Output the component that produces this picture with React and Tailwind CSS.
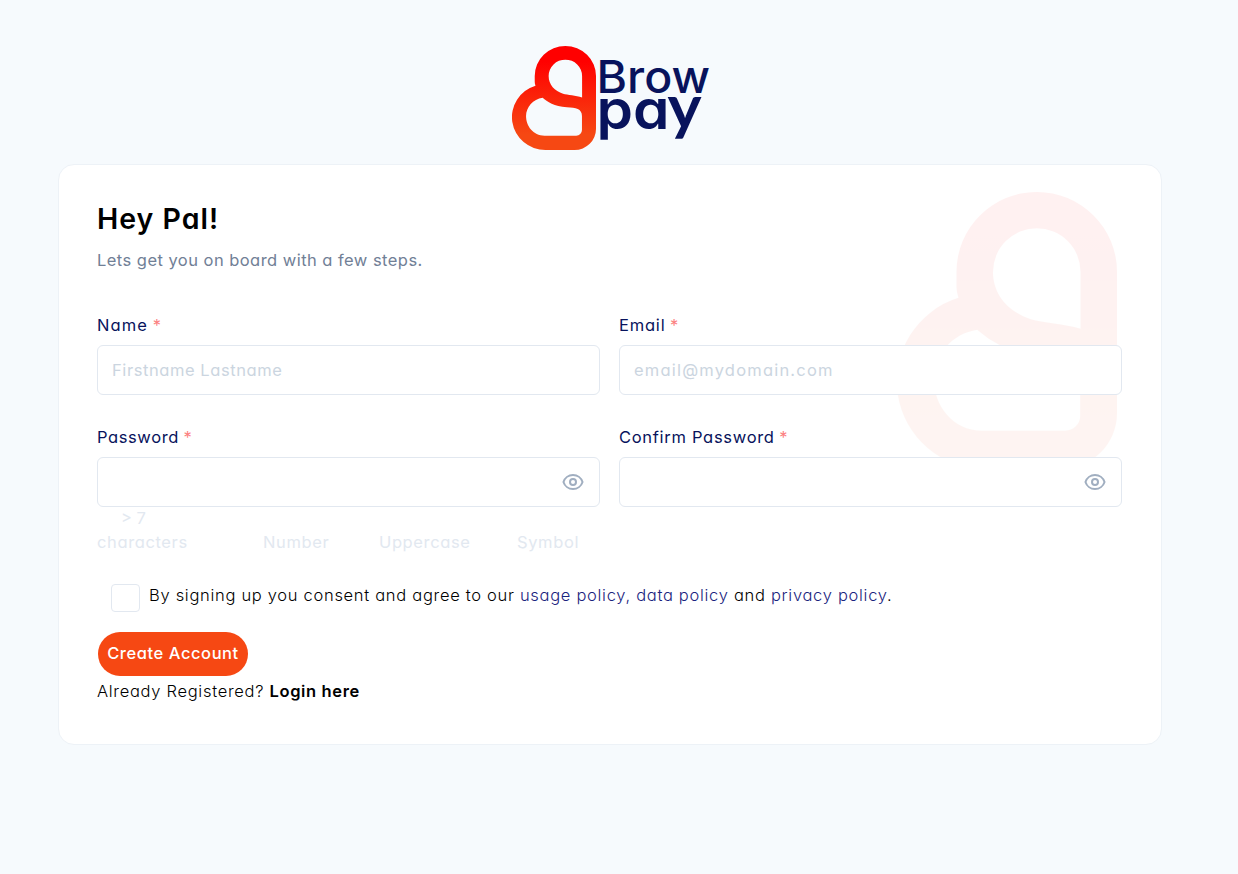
import React, { useState } from 'react';

const LogoMark = ({ id, className }) => (
  <svg viewBox="0 0 658 832" className={className} preserveAspectRatio="none" aria-hidden="true">
    <defs>
      <linearGradient id={id} x1="0" y1="0" x2="0" y2="1">
        <stop offset="0.15" stopColor="#ff0000" />
        <stop offset="0.85" stopColor="#f64813" />
      </linearGradient>
    </defs>
    <path
      fill={`url(#${id})`}
      fillRule="evenodd"
      d="M178 240 A240 240 0 0 1 658 240 V664 A168 168 0 0 1 490 832 H262 A263 263 0 0 1 184 318 Q178 300 178 285 Z
         M549 411 V240 A131 131 0 0 0 287 240 C287 310 335 360 400 382 C435 393 500 395 549 411 Z
         M240 414 C275 444 330 485 430 489 C500 492 548 500 548 560 V672 A45 45 0 0 1 503 717 H255 C165 717 110 640 110 560 C110 490 165 425 240 414 Z"
    />
  </svg>
);

const Logo = () => (
  <div className="ml-0.5 flex h-[104px] w-[198px]">
    <LogoMark id="logo-gradient" className="h-[104px] w-[84px] shrink-0" />
    <svg viewBox="0 0 114 104" className="h-[104px] w-[114px] shrink-0 overflow-visible font-['Inter']" fill="#08135c" style={{ fontFeatureSettings: '"cv11"' }}>
      <text x="0.5" y="47.2" fontSize="45" fontWeight="500" textLength="113.5" lengthAdjust="spacingAndGlyphs">Brow</text>
      <text x="0.5" y="82.6" fontSize="55" fontWeight="600" textLength="73" lengthAdjust="spacingAndGlyphs">pa</text>
      <text x="71.5" y="82.6" fontSize="61" fontWeight="700" fontFamily="Lato" textLength="34" lengthAdjust="spacingAndGlyphs">y</text>
    </svg>
  </div>
);

const EyeIcon = () => (
  <svg viewBox="0 0 24 24" className="h-6 w-6" fill="none" stroke="#a0aec0" strokeWidth="2" strokeLinecap="round" strokeLinejoin="round">
    <circle cx="12" cy="12" r="3" />
    <path d="M2.458 12C3.732 7.943 7.523 5 12 5s8.268 2.943 9.542 7c-1.274 4.057-5.064 7-9.542 7s-8.268-2.943-9.542-7z" />
  </svg>
);

const Field = ({ label, labelClass, name, type = 'text', placeholder, inputClass = '' }) => {
  const [visible, setVisible] = useState(false);
  const isPassword = type === 'password';

  return (
    <div>
      <label htmlFor={name} className="block h-6 leading-6 text-[#08135c]">
        <span className={labelClass}>{label}</span> <span className="text-[#fc8181]">*</span>
      </label>
      <div className="relative mt-2">
        <input
          id={name}
          name={name}
          type={isPassword && visible ? 'text' : type}
          placeholder={placeholder}
          className={`block h-[50px] w-full rounded-md border border-[#e2e8f0] bg-white px-3.5 placeholder:text-[#cbd5e0] focus:outline-none ${inputClass}`}
        />
        {isPassword && (
          <button type="button" onClick={() => setVisible(!visible)} aria-label="Toggle password" className="absolute right-[15px] top-[13px]">
            <EyeIcon />
          </button>
        )}
      </div>
    </div>
  );
};

const App = () => {
  return (
    <div className="flex min-h-[874px] flex-col items-center bg-[#f6fafd] pr-[18px] pt-[46px] font-['Inter',sans-serif] text-[16.5px] text-black" style={{ fontFeatureSettings: '"cv11"' }}>
      <Logo />

      <div className="relative mt-3.5 h-[581px] w-[1104px] rounded-2xl border border-[#edf2f7] bg-white px-[38px] pt-[34px]">
        {/* Watermark */}
        <LogoMark id="watermark-gradient" className="absolute right-11 top-[27px] h-[277px] w-[220px] opacity-5" />

        <form className="relative" onSubmit={(e) => e.preventDefault()}>
          <h1 className="h-10 text-[28.5px] font-semibold leading-10 tracking-[1px]">Hey Pal!</h1>
          <p className="mt-[9px] h-6 leading-[25px] tracking-[0.46px] text-[#718096]">Lets get you on board with a few steps.</p>

          <div className="mt-[41px] grid grid-cols-2 gap-x-[19px] gap-y-[30px] pr-px">
            <Field label="Name" labelClass="tracking-[1.1px]" name="name" placeholder="Firstname Lastname" inputClass="tracking-[0.57px]" />
            <Field label="Email" labelClass="tracking-[0.8px]" name="email" placeholder="email@mydomain.com" inputClass="tracking-[1.2px]" />
            <Field label="Password" labelClass="tracking-[0.6px]" name="password" type="password" />
            <Field label="Confirm Password" labelClass="tracking-[0.7px]" name="confirm" type="password" />
          </div>

          <div className="-mt-px flex h-12 w-[503px] items-end leading-6 tracking-[0.62px] text-[#e2e8f0]">
            <span className="w-[166px]"><span className="block pl-6 tracking-normal">&gt; 7</span>characters</span>
            <span className="w-[116px]">Number</span>
            <span className="w-[138px]">Uppercase</span>
            <span>Symbol</span>
          </div>

          <div className="mt-[30px] flex h-7 pl-3.5">
            <input type="checkbox" className="h-7 w-[29px] shrink-0 appearance-none rounded border border-[#e2e8f0] bg-white" />
            <p className="ml-[9px] whitespace-nowrap font-light leading-[23px] tracking-[0.7px]">
              By signing up you consent and agree to our <a href="#" className="text-[#1a237e]">usage policy,</a> <a href="#" className="text-[#1a237e]">data policy</a> and <a href="#" className="text-[#1a237e]">privacy policy</a>.
            </p>
          </div>

          <button type="submit" className="ml-px mt-5 flex h-11 w-[150px] items-center justify-center whitespace-nowrap rounded-full bg-[#f64813] pb-px font-medium tracking-[0.57px] text-white">
            Create Account
          </button>
          <p className="mt-[3px] whitespace-nowrap font-light leading-6 tracking-[0.7px]">
            Already Registered? <a href="#" className="font-semibold tracking-[0.65px]">Login here</a>
          </p>
        </form>
      </div>
    </div>
  );
};

export default App;
